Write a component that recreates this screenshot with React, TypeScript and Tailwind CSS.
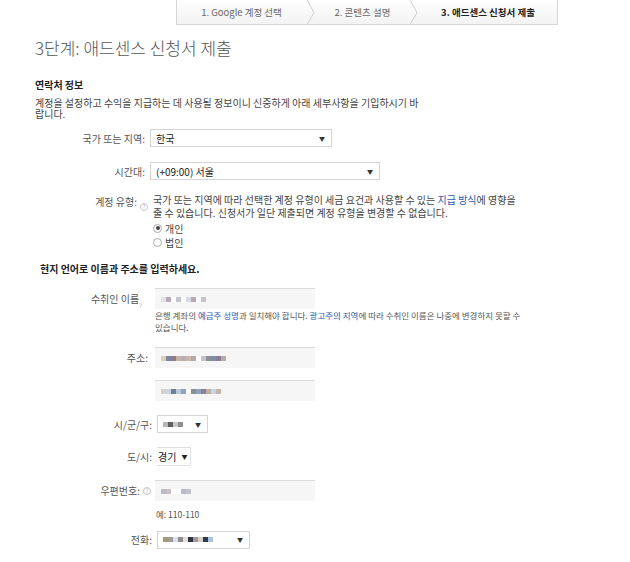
import React from "react";

const font = { fontFamily: '"Noto Sans CJK KR", "Noto Sans", Arial, sans-serif' };

function Chevron() {
  return (
    <svg width="10" height="25" viewBox="0 0 10 25" className="shrink-0">
      <polyline points="1,0 8,12.5 1,25" fill="none" stroke="#cfcfcf" strokeWidth="1" />
    </svg>
  );
}

function Help() {
  return (
    <span className="inline-flex items-center justify-center w-[8px] h-[8px] rounded-full border border-[#c8c8c8] text-[6px] leading-none text-[#aaa] ml-[3px]">
      ?
    </span>
  );
}

function Mosaic({ colors }: { colors: string[] }) {
  return (
    <span className="flex items-center">
      {colors.map((c, i) => (
        <span key={i} className="inline-block w-[5px] h-[5px]" style={{ backgroundColor: c }} />
      ))}
    </span>
  );
}

function Select({ children, className }: { children: React.ReactNode; className: string }) {
  return (
    <div
      className={`flex items-center justify-between h-[18px] border border-[#d4d4d4] bg-white pl-[5px] pr-[6px] text-[10px] text-[#222] ${className}`}
    >
      <span className="flex items-center">{children}</span>
      <span className="text-[6px] text-[#333]">▼</span>
    </div>
  );
}

function TextBox({ children }: { children?: React.ReactNode }) {
  return (
    <div className="flex items-center w-[160px] h-[21px] bg-[#f6f6f6] border-t border-[#dcdcdc] px-[6px]">
      {children}
    </div>
  );
}

function Row({ label, children, className }: { label: string; children: React.ReactNode; className: string }) {
  return (
    <div className={`flex items-center ${className}`}>
      <div className="w-[115px] text-right text-[10px] text-[#555] pr-[5px]">{label}</div>
      {children}
    </div>
  );
}

export default function App() {
  return (
    <main className="w-[630px] h-[562px] bg-white overflow-hidden" style={font}>
      {/* step bar */}
      <div className="flex justify-start pl-[176px]">
        <div className="flex items-center h-[25px] w-[382px] border border-t-0 border-[#d6d6d6] bg-gradient-to-b from-white to-[#f3f3f3] text-[9.5px]">
          <div className="w-[129px] text-center text-[#666]">1. Google 계정 선택</div>
          <Chevron />
          <div className="w-[93px] text-center text-[#666]">2. 콘텐츠 설명</div>
          <Chevron />
          <div className="flex-1 text-center font-bold text-[#222]">3. 애드센스 신청서 제출</div>
        </div>
      </div>

      <div className="pl-[35px]">
        <h1 className="mt-[12px] text-[17px] font-light text-[#555] leading-[22px]">3단계: 애드센스 신청서 제출</h1>

        <h2 className="mt-[19px] text-[10px] font-bold text-[#222] leading-[14px]">연락처 정보</h2>
        <p className="mt-[5px] w-[392px] text-[10px] text-[#444] leading-[11px]">
          계정을 설정하고 수익을 지급하는 데 사용될 정보이니 신중하게 아래 세부사항을 기입하시기 바랍니다.
        </p>

        <Row label="국가 또는 지역:" className="mt-[10px]">
          <Select className="w-[182px]">한국</Select>
        </Row>
        <Row label="시간대:" className="mt-[15px]">
          <Select className="w-[230px]">(+09:00) 서울</Select>
        </Row>

        <div className="flex mt-[13px]">
          <div className="w-[115px] text-right text-[10px] text-[#555] pr-[2px] flex items-start justify-end pt-[1px]">
            계정 유형:
            <span className="mt-[3px]">
              <Help />
            </span>
          </div>
          <div className="pl-[3px]">
            <p className="w-[365px] text-[10px] text-[#444] leading-[13px]">
              국가 또는 지역에 따라 선택한 계정 유형이 세금 요건과 사용할 수 있는{" "}
              <span className="text-[#2a5ab0]">지급 방식</span>에 영향을 줄 수 있습니다. 신청서가 일단 제출되면 계정 유형을 변경할 수 없습니다.
            </p>
            <div className="flex items-center mt-[2px] h-[14px] text-[10px] text-[#444]">
              <span className="w-[9px] h-[9px] rounded-full border border-[#aaa] flex items-center justify-center mr-[3px]">
                <span className="w-[4px] h-[4px] rounded-full bg-[#444]" />
              </span>
              개인
            </div>
            <div className="flex items-center h-[14px] text-[10px] text-[#444]">
              <span className="w-[9px] h-[9px] rounded-full border border-[#aaa] mr-[3px]" />
              법인
            </div>
          </div>
        </div>

        <h2 className="mt-[13px] ml-[5px] text-[10px] font-bold text-[#222] leading-[14px]">현지 언어로 이름과 주소를 입력하세요.</h2>

        <div className="flex items-center mt-[12px]">
          <div className="w-[120px] text-right text-[10px] text-[#555] pr-[13px] flex items-end justify-end">
            수취인 이름<span className="text-[6px] leading-none text-[#aaa] mb-[-3px]">?</span>
          </div>
          <TextBox>
            <Mosaic colors={["#dfe1ea", "#b8aab8", "#fff", "#c4c4cc", "#fff", "#d8dbe6", "#b7a9b6", "#fff", "#c9c3cd"]} />
          </TextBox>
        </div>
        <p className="ml-[120px] mt-0 w-[370px] text-[8.5px] text-[#555] leading-[12px]">
          은행 계좌의 <span className="text-[#2a5ab0]">예금주 성명</span>과 일치해야 합니다.{" "}
          <span className="text-[#2a5ab0]">광고주의 지역</span>에 따라 수취인 이름은 나중에 변경하지 못할 수 있습니다.
        </p>

        <div className="flex items-center mt-[14px]">
          <div className="w-[120px] text-right text-[10px] text-[#555] pr-[7px]">주소:</div>
          <TextBox>
            <Mosaic colors={["#d9cfb8", "#7c84a0", "#8d7e86", "#c4b3a8", "#b9aeb0", "#c8b8b0", "#b4a9a4", "#fff", "#c4c2c8", "#8b8f96", "#7d8fa8", "#8a7c96", "#b9aca2"]} />
          </TextBox>
        </div>
        <div className="flex items-center mt-[12px]">
          <div className="w-[120px]" />
          <TextBox>
            <Mosaic colors={["#d8d0c0", "#c9d6e0", "#6f7d98", "#b8c8d8", "#8ea2bc", "#fff", "#8d8f96", "#8ea2bc", "#8d7ea8", "#bbb0a4", "#c8d4e0", "#c2b7b0"]} />
          </TextBox>
        </div>

        <div className="flex items-center mt-[14px]">
          <div className="w-[122px] text-right text-[10px] text-[#555] pr-[5px]">시/군/구:</div>
          <Select className="w-[51px]">
            <Mosaic colors={["#b8b8b8", "#5f5f5f", "#c9c9c9", "#8e8e8e"]} />
          </Select>
        </div>

        <div className="flex items-center mt-[14px]">
          <div className="w-[122px] text-right text-[10px] text-[#555] pr-[5px]">도/시:</div>
          <div className="flex items-center h-[19px] w-[34px] border border-[#e0e0e0] border-l-0 pl-[1px] text-[10px] text-[#222]">
            경기<span className="text-[6px] ml-[5px]">▼</span>
          </div>
        </div>

        <div className="flex items-center mt-[14px]">
          <div className="w-[120px] text-right text-[10px] text-[#555] pr-[4px] flex items-center justify-end">
            우편번호:
            <Help />
          </div>
          <TextBox>
            <Mosaic colors={["#b9bcc8", "#c9c1c4", "#fff", "#fff", "#b7bac8", "#c3c3cb"]} />
          </TextBox>
        </div>
        <p className="ml-[121px] mt-[7px] text-[8.5px] text-[#555]">예: 110-110</p>

        <div className="flex items-center mt-[10px]">
          <div className="w-[122px] text-right text-[10px] text-[#555] pr-[5px]">전화:</div>
          <Select className="w-[93px]">
            <Mosaic colors={["#a89a6c", "#9d9d9d", "#d6e2ea", "#8e8e8e", "#e8e0d8", "#2e3440", "#a09aa0", "#d8d0c8", "#2f3a50", "#a8c4dc"]} />
          </Select>
        </div>
      </div>
    </main>
  );
}
